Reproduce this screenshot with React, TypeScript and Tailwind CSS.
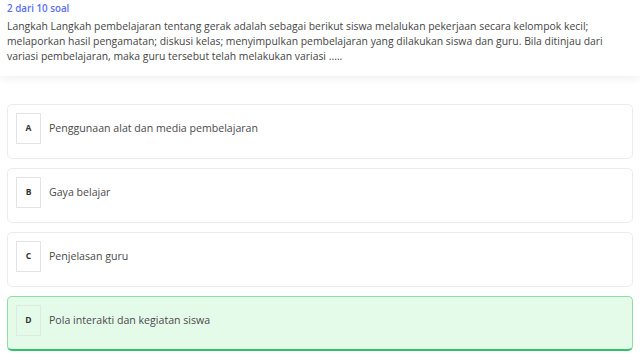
const options = [
  { key: "A", text: "Penggunaan alat dan media pembelajaran", selected: false },
  { key: "B", text: "Gaya belajar", selected: false },
  { key: "C", text: "Penjelasan guru", selected: false },
  { key: "D", text: "Pola interakti dan kegiatan siswa", selected: true },
];

function OptionCard({ letter, text, selected }: { letter: string; text: string; selected: boolean }) {
  return (
    <div
      className={
        selected
          ? "flex h-[55px] items-start gap-[8px] rounded-[5px] border border-[#8fdca6] border-b-2 border-b-[#2ec26a] bg-[#e5fbea] px-[8px] pt-[8px]"
          : "flex h-[55px] items-start gap-[8px] rounded-[5px] border border-[#ececef] bg-white px-[8px] pt-[8px]"
      }
    >
      <div
        className={
          selected
            ? "flex h-[31px] w-[25px] shrink-0 items-center justify-center border border-[#dfe8e1] bg-[#e5fbea] text-[8.5px] font-bold text-[#333]"
            : "flex h-[31px] w-[25px] shrink-0 items-center justify-center border border-[#e3e3e6] bg-white text-[8.5px] font-bold text-[#333]"
        }
      >
        {letter}
      </div>
      <div className="flex h-[31px] items-center text-[10.6px] text-[#4a4a4a]">{text}</div>
    </div>
  );
}

export default function App() {
  return (
    <div className="min-h-[361px] w-[640px] bg-white font-['Open_Sans',sans-serif]">
      <div className="relative z-10 h-[76px] bg-white px-[7px] pt-[2px] shadow-[0_2px_10px_rgba(0,0,0,0.07)]">
        <div className="text-[9.8px] font-semibold leading-[14px] text-[#5b6ef0]">2 dari 10 soal</div>
        <p className="mt-[3px] whitespace-nowrap text-[10.4px] leading-[15px] text-[#454545]">
          Langkah Langkah pembelajaran tentang gerak adalah sebagai berikut siswa melalukan pekerjaan secara kelompok kecil;
          <br />
          melaporkan hasil pengamatan; diskusi kelas; menyimpulkan pembelajaran yang dilakukan siswa dan guru. Bila ditinjau dari
          <br />
          variasi pembelajaran, maka guru tersebut telah melakukan variasi .....
        </p>
      </div>
      <div className="flex flex-col gap-[9px] px-[7px] pt-[28px]">
        {options.map((o) => (
          <OptionCard key={o.key} letter={o.key} text={o.text} selected={o.selected} />
        ))}
      </div>
    </div>
  );
}
